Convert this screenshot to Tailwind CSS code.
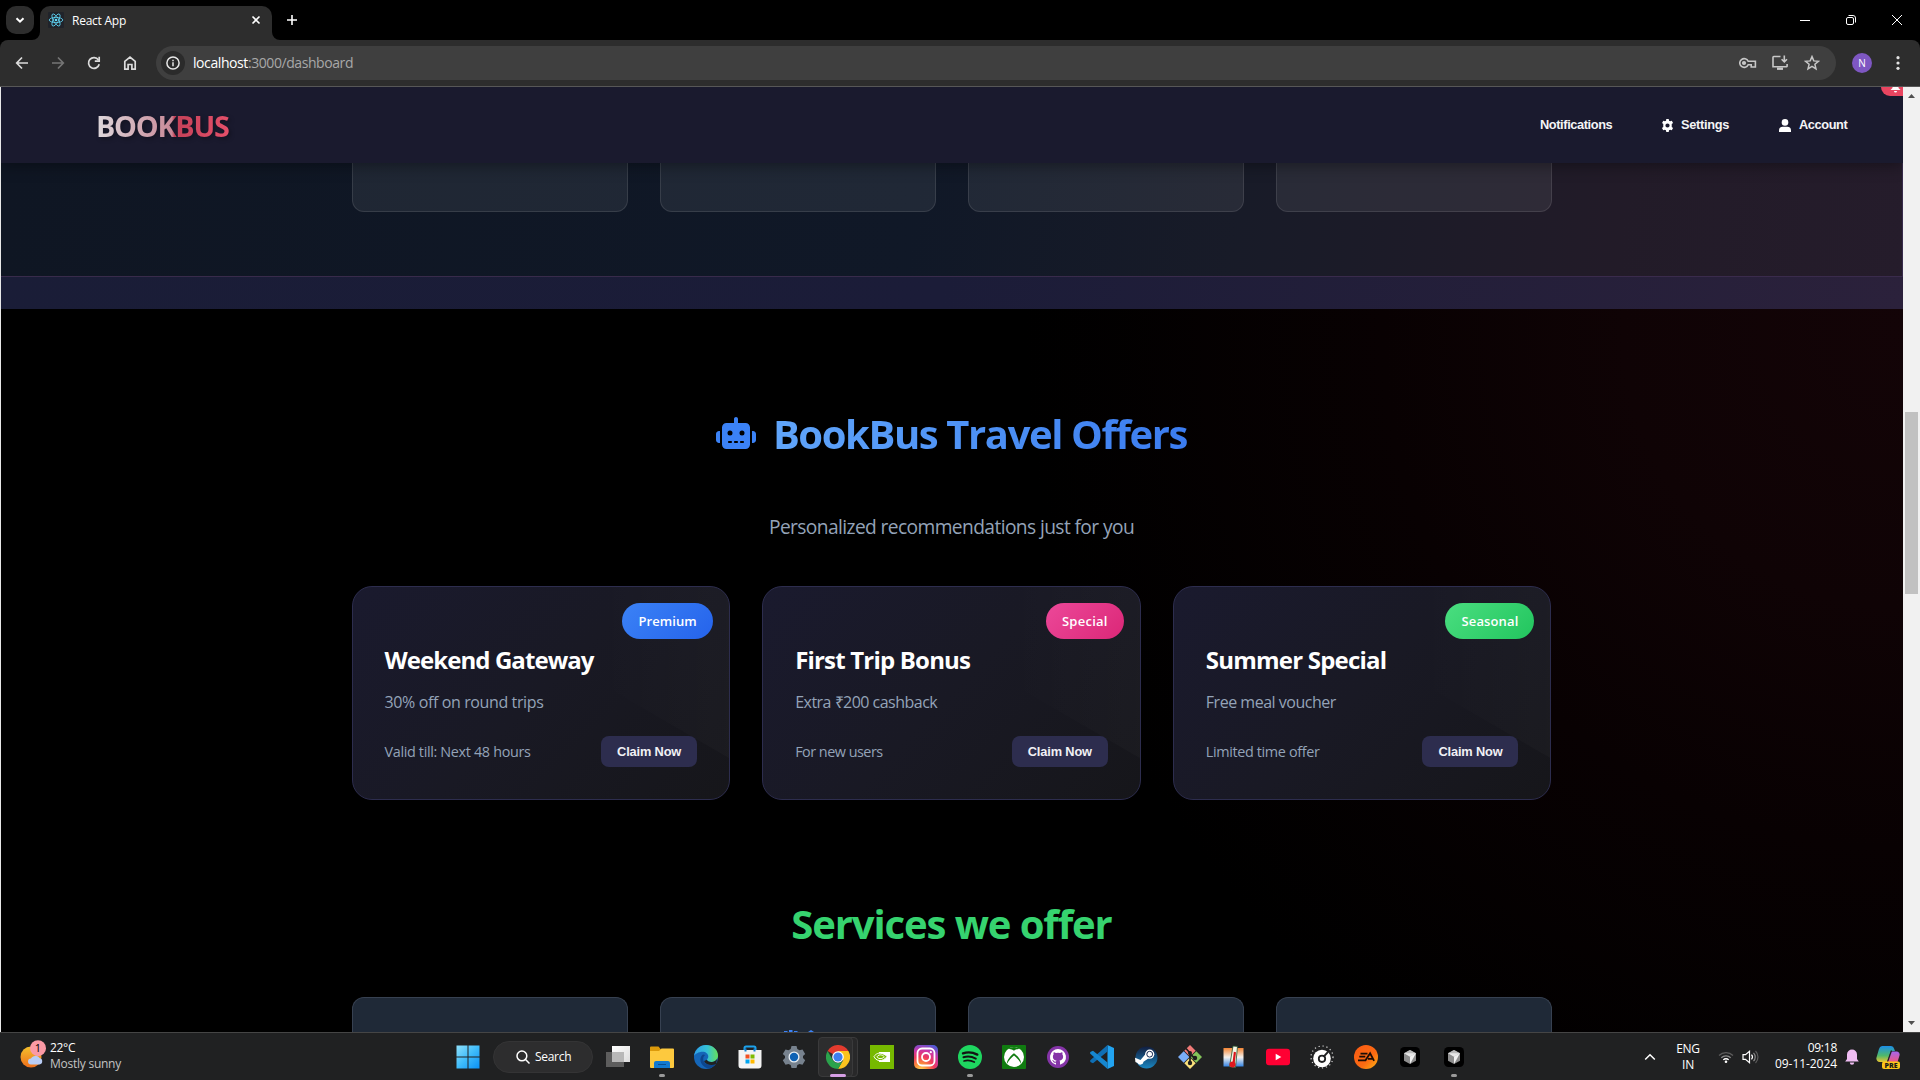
<!DOCTYPE html>
<html lang="en">
<head>
<meta charset="utf-8">
<title>React App</title>
<script src="https://cdn.jsdelivr.net/npm/@tailwindcss/browser@4"></script>
</head>
<body class="w-[1920px] h-[1080px] overflow-hidden bg-black font-['Open_Sans',sans-serif] flex flex-col">

<!-- Tab strip -->
<div class="h-10 shrink-0 bg-black flex items-center pl-1.5 relative">
  <div class="size-7 rounded-[10px] bg-[#2d2d2d] flex items-center justify-center">
    <svg class="size-3" viewBox="0 0 12 12" fill="none" stroke="#fff" stroke-width="2"><path d="M2.5 4.2 6 7.7l3.500-3.500"/></svg>
  </div>
  <div class="ml-1.5 w-[232px] h-[34px] self-end rounded-t-[10px] bg-[#2d2d2d] flex items-center pl-2 pr-[10px] relative">
    <svg class="absolute -left-2 bottom-0 size-2" viewBox="0 0 8 8"><path d="M8 0v8H0a8 8 0 0 0 8-8z" fill="#2d2d2d"/></svg>
    <svg class="absolute -right-2 bottom-0 size-2" viewBox="0 0 8 8"><path d="M0 0v8h8a8 8 0 0 1-8-8z" fill="#2d2d2d"/></svg>
    <svg class="size-4 mt-[-6px]" viewBox="0 0 16 16"><rect width="16" height="16" rx="1" fill="#20232a"/><g fill="none" stroke="#61dafb" stroke-width=".8"><ellipse cx="8" cy="8" rx="6.800" ry="2.600"/><ellipse cx="8" cy="8" rx="6.800" ry="2.600" transform="rotate(60 8 8)"/><ellipse cx="8" cy="8" rx="6.800" ry="2.600" transform="rotate(120 8 8)"/></g><circle cx="8" cy="8" r="1.300" fill="#61dafb"/></svg>
    <span class="ml-2 mt-[-5px] text-[12px] leading-4 tracking-[-0.25px] text-white">React App</span>
    <svg class="ml-auto mt-[-6px] size-3" viewBox="0 0 12 12" stroke="#fff" stroke-width="1.600"><path d="M2.500 2.500l7 7m0-7l-7 7"/></svg>
  </div>
  <svg class="ml-[14px] size-3" viewBox="0 0 12 12" stroke="#fff" stroke-width="1.600"><path d="M6 1v10M1 6h10"/></svg>
  <div class="ml-auto flex items-center gap-9 pr-[18px]">
    <svg class="size-[10px]" viewBox="0 0 10 10" stroke="#fff"><path d="M0 5.500h10"/></svg>
    <svg class="size-[10px]" viewBox="0 0 10 10" fill="none" stroke="#fff"><rect x=".5" y="2.500" width="7" height="7" rx="1.500"/><path d="M2.500.5h4.500a2.500 2.500 0 0 1 2.500 2.500v4.500"/></svg>
    <svg class="size-[10px] overflow-visible" viewBox="0 0 10 10" stroke="#fff"><path d="M0 0l10 10M10 0L0 10"/></svg>
  </div>
</div>

<!-- Toolbar -->
<div class="h-[46px] shrink-0 bg-[#2d2d2d] rounded-t-lg flex items-center">
  <div class="flex items-center gap-5 pl-[14px] w-[156px] text-[#dcdcdc]">
    <svg class="size-4" viewBox="0 0 16 16" fill="none" stroke="currentColor" stroke-width="1.700"><path d="M14 8H3M8 2.500L2.700 8 8 13.500"/></svg>
    <svg class="size-4 text-[#757575]" viewBox="0 0 16 16" fill="none" stroke="currentColor" stroke-width="1.700"><path d="M2 8h11M8 2.500L13.300 8 8 13.500"/></svg>
    <svg class="size-4" viewBox="0 0 16 16" fill="none" stroke="currentColor" stroke-width="1.700"><path d="M13.200 9.200A5.400 5.400 0 1 1 12.400 4.900"/><path d="M13.200 1.800v4.400H8.800"/></svg>
    <svg class="size-4" viewBox="0 0 16 16" fill="none" stroke="currentColor" stroke-width="1.700"><path d="M2.800 6.300L8 2.100l5.200 4.200v7.900H9.900V9.500H6.100v4.700H2.800z"/></svg>
  </div>
  <div class="w-[1680px] h-[34px] rounded-full bg-[#3f3f3f] flex items-center pl-[5px] pr-4">
    <div class="size-6 rounded-full bg-[#2b2b2b] flex items-center justify-center">
      <svg class="size-[14px]" viewBox="0 0 14 14"><circle cx="7" cy="7" r="6.100" fill="none" stroke="#e8e8e8" stroke-width="1.500"/><path d="M7 6.300v3.900M7 3.700v1.500" stroke="#e8e8e8" stroke-width="1.500"/></svg>
    </div>
    <div class="ml-2 text-[14px] leading-5 tracking-[-0.42px] text-[#a8a8a8]"><span class="text-white">localhost</span>:3000/dashboard</div>
    <div class="ml-auto flex items-center text-[#c7c7c7]">
      <svg class="w-[18px] h-[12px] mr-[15px]" viewBox="0 0 18 12" fill="none" stroke="currentColor" stroke-width="1.600"><path d="M9.200 4.300A4.400 4.400 0 1 0 9.200 7.700h3V10h4.200V4.300z"/><circle cx="5" cy="6" r="1.300" fill="currentColor"/></svg>
      <svg class="size-4 mr-4" viewBox="0 0 16 16" fill="none" stroke="currentColor" stroke-width="1.600"><path d="M8.500 1.500H1.800a.8.800 0 0 0-.8.800v9.400h13.700a.5.500 0 0 0 .4-.5V9M12.300.5v6M9.600 4.200l2.700 2.700L15 4.200"/><path d="M5 13.700h6" stroke-width="2.400"/></svg>
      <svg class="size-4" viewBox="0 0 16 16" fill="none" stroke="currentColor" stroke-width="1.500"><path d="M8 1.600l1.800 4.300 4.600.4-3.500 3 1.100 4.600L8 11.400l-4 2.500 1.100-4.600-3.500-3 4.600-.4z"/></svg>
    </div>
  </div>
  <div class="ml-4 size-5 rounded-full bg-[#7e57c2] text-white text-[10px] flex items-center justify-center">N</div>
  <svg class="ml-[18px] w-4 h-4" viewBox="0 0 16 16" fill="#e3e3e3"><circle cx="8" cy="2.700" r="1.600"/><circle cx="8" cy="8" r="1.600"/><circle cx="8" cy="13.300" r="1.600"/></svg>
</div>
<div class="h-px shrink-0 bg-[#575757]"></div>

<!-- Viewport -->
<div class="h-[945px] shrink-0 flex">
  <div class="w-px bg-[#e8e8e8]"></div>
  <main class="w-[1902px] overflow-hidden bg-[radial-gradient(circle_at_1902px_240px,#130407_0,#0f0305_280px,#080102_520px,#000_880px)] flex flex-col">
    <header class="h-[76px] shrink-0 bg-[#1a1a2e] shadow-[0_2px_15px_rgba(0,0,0,0.4)] relative z-10 flex items-center pl-[95px] pr-[55px]">
      <div class="mt-px text-[28.800px] leading-10 font-bold tracking-[-1.25px] bg-[linear-gradient(90deg,#ded8dc_0%,#c98a98_57%,#c44158_59%,#e5506a_100%)] bg-clip-text text-transparent [filter:drop-shadow(2px_2px_2px_rgba(0,0,0,0.3))]">BOOKBUS</div>
      <nav class="ml-auto flex items-center font-['Liberation_Sans',Arial,sans-serif] font-bold text-[12.800px] leading-5 tracking-[-0.4px] text-[#f4f4f6]">
        <span class="w-[121px]">Notifications</span>
        <svg class="size-[13px] mr-[7px]" viewBox="0 0 16 16"><path fill="#fff" fill-rule="evenodd" d="M6.500 0h3l.4 2.100 1.400.8 2-.7 1.500 2.600-1.600 1.400v3.600l1.600 1.400-1.500 2.600-2-.7-1.400.8-.4 2.100h-3l-.4-2.100-1.400-.8-2 .7-1.500-2.600 1.600-1.400V6.200L1.300 4.800l1.500-2.600 2 .7 1.400-.8zM8 5.400a2.600 2.600 0 1 0 0 5.200 2.600 2.600 0 0 0 0-5.200z"/></svg>
        <span class="w-[98px] tracking-[-0.3px]">Settings</span>
        <svg class="w-3 h-[13px] mr-2" viewBox="0 0 12 13" fill="#fff"><circle cx="6" cy="3.400" r="3.300"/><path d="M0 13v-1.500A3.700 3.700 0 0 1 3.700 7.800h4.600A3.700 3.700 0 0 1 12 11.500V13z"/></svg>
        <span class="w-[49px]">Account</span>
      </nav>
      <div class="absolute right-0 top-0 w-[22px] h-[9px] bg-[#e94560] rounded-bl-[9px]">
        <svg class="absolute left-[9px] top-0 w-[11px] h-[6px]" viewBox="0 0 11 6" fill="#fff"><path d="M2.500 0h6v1l2 2H.5l2-2zM4 4h3a1.500 1.500 0 0 1-3 0z"/></svg>
      </div>
    </header>

    <section class="h-[146px] shrink-0 flex flex-col bg-[linear-gradient(100deg,#1a1d37_0%,#1b1c38_50%,#2b213b_100%)]">
      <div class="h-[114px] border-b border-r border-[#3d2d50]/90 bg-[linear-gradient(97deg,#0f1623_0%,#101827_48%,#181b28_65%,#221b28_85%,#251c2b_100%)] flex justify-center gap-8">
        <div class="w-[276px] h-[49px] rounded-b-xl bg-white/7 border border-t-0 border-white/10"></div>
        <div class="w-[276px] h-[49px] rounded-b-xl bg-white/7 border border-t-0 border-white/10"></div>
        <div class="w-[276px] h-[49px] rounded-b-xl bg-white/7 border border-t-0 border-white/10"></div>
        <div class="w-[276px] h-[49px] rounded-b-xl bg-white/7 border border-t-0 border-white/10"></div>
      </div>
    </section>

    <section class="w-[1201px] pr-px mx-auto flex flex-col">
      <h2 class="mt-[101px] h-12 flex items-center justify-center gap-[17px]">
        <svg class="w-10 h-8 mt-[-3px]" viewBox="0 0 640 512" fill="#3b82f6"><path d="M320 0c17.700 0 32 14.300 32 32V96H472c39.800 0 72 32.200 72 72V440c0 39.800-32.200 72-72 72H168c-39.800 0-72-32.200-72-72V168c0-39.800 32.200-72 72-72H288V32c0-17.700 14.300-32 32-32zM208 384c-8.800 0-16 7.200-16 16s7.200 16 16 16h32c8.800 0 16-7.200 16-16s-7.200-16-16-16H208zm96 0c-8.800 0-16 7.200-16 16s7.200 16 16 16h32c8.800 0 16-7.200 16-16s-7.200-16-16-16H304zm96 0c-8.800 0-16 7.200-16 16s7.200 16 16 16h32c8.800 0 16-7.200 16-16s-7.200-16-16-16H400zM264 256a40 40 0 1 0-80 0 40 40 0 1 0 80 0zm152 40a40 40 0 1 0 0-80 40 40 0 1 0 0 80zM48 224H64V416H48c-26.500 0-48-21.500-48-48V272c0-26.500 21.500-48 48-48zm544 0c26.500 0 48 21.500 48 48v96c0 26.500-21.500 48-48 48H576V224h16z"/></svg>
        <span class="text-[40px] leading-12 font-bold tracking-[-1.4px] bg-linear-to-r from-[#60a5fa] to-[#3b7cf0] bg-clip-text text-transparent">BookBus Travel Offers</span>
      </h2>
      <p class="mt-[55px] h-7 text-center text-[19.200px] leading-7 tracking-[-0.6px] text-[#94a3b8]">Personalized recommendations just for you</p>

      <div class="mt-[45px] grid grid-cols-3 gap-8">
        <article class="h-[214px] rounded-[20px] border border-[#2d2d4e] bg-[linear-gradient(135deg,#1a1a2e_0%,#191924_50%,#16161a_100%)] px-8 pt-[57px] relative overflow-hidden">
          <div class="absolute right-0 top-0 w-[130px] h-[171px] bg-linear-to-r from-transparent to-white/2 [clip-path:polygon(0_0,100%_0,100%_100%,0_56%)]"></div>
          <span class="absolute top-4 right-4 h-9 w-[91px] rounded-[20px] bg-[linear-gradient(135deg,#3b82f6,#2563eb)] text-white text-[13px] leading-[37px] tracking-[0.08px] font-semibold text-center">Premium</span>
          <h3 class="text-2xl leading-8 font-bold tracking-[-0.93px] text-white relative">Weekend Gateway</h3>
          <p class="mt-[14px] text-base leading-6 tracking-[-0.38px] text-[#94a3b8] relative">30% off on round trips</p>
          <div class="mt-[22px] flex justify-between relative">
            <span class="text-[14.400px] leading-[31px] tracking-[-0.34px] text-[#94a3b8]">Valid till: Next 48 hours</span>
            <button class="w-24 h-[31px] rounded-lg bg-[#2d2d4e] font-['Liberation_Sans',Arial,sans-serif] font-bold text-[12.800px] tracking-[-0.15px] text-[#f1f1f5]">Claim Now</button>
          </div>
        </article>
        <article class="h-[214px] rounded-[20px] border border-[#2d2d4e] bg-[linear-gradient(135deg,#1a1a2e_0%,#191924_50%,#16161a_100%)] px-8 pt-[57px] relative overflow-hidden">
          <div class="absolute right-0 top-0 w-[130px] h-[171px] bg-linear-to-r from-transparent to-white/2 [clip-path:polygon(0_0,100%_0,100%_100%,0_56%)]"></div>
          <span class="absolute top-4 right-4 h-9 w-[78px] rounded-[20px] bg-[linear-gradient(135deg,#ec4899,#db2777)] text-white text-[13px] leading-[37px] tracking-[0.25px] font-semibold text-center">Special</span>
          <h3 class="text-2xl leading-8 font-bold tracking-[-0.81px] text-white relative">First Trip Bonus</h3>
          <p class="mt-[14px] text-base leading-6 tracking-[-0.52px] text-[#94a3b8] relative">Extra ₹200 cashback</p>
          <div class="mt-[22px] flex justify-between relative">
            <span class="text-[14.400px] leading-[31px] tracking-[-0.5px] text-[#94a3b8]">For new users</span>
            <button class="w-24 h-[31px] rounded-lg bg-[#2d2d4e] font-['Liberation_Sans',Arial,sans-serif] font-bold text-[12.800px] tracking-[-0.15px] text-[#f1f1f5]">Claim Now</button>
          </div>
        </article>
        <article class="h-[214px] rounded-[20px] border border-[#2d2d4e] bg-[linear-gradient(135deg,#1a1a2e_0%,#191924_50%,#16161a_100%)] px-8 pt-[57px] relative overflow-hidden">
          <div class="absolute right-0 top-0 w-[130px] h-[171px] bg-linear-to-r from-transparent to-white/2 [clip-path:polygon(0_0,100%_0,100%_100%,0_56%)]"></div>
          <span class="absolute top-4 right-4 h-9 w-[89px] rounded-[20px] bg-[linear-gradient(135deg,#4ade80,#22c55e)] text-white text-[13px] leading-[37px] tracking-[0.12px] font-semibold text-center">Seasonal</span>
          <h3 class="text-2xl leading-8 font-bold tracking-[-0.79px] text-white relative">Summer Special</h3>
          <p class="mt-[14px] text-base leading-6 tracking-[-0.48px] text-[#94a3b8] relative">Free meal voucher</p>
          <div class="mt-[22px] flex justify-between relative">
            <span class="text-[14.400px] leading-[31px] tracking-[-0.36px] text-[#94a3b8]">Limited time offer</span>
            <button class="w-24 h-[31px] rounded-lg bg-[#2d2d4e] font-['Liberation_Sans',Arial,sans-serif] font-bold text-[12.800px] tracking-[-0.15px] text-[#f1f1f5]">Claim Now</button>
          </div>
        </article>
      </div>

      <h2 class="mt-[100px] h-12 text-center text-[40px] leading-12 font-bold tracking-[-1.1px] text-[#36d36f]">Services we offer</h2>
      <div class="mt-[49px] grid grid-cols-4 gap-8">
        <div class="h-[60px] rounded-t-xl bg-[#1f2937] border border-b-0 border-[#374151]"></div>
        <div class="h-[60px] rounded-t-xl bg-[#1f2937] border border-b-0 border-[#374151] pt-8 pl-[122px]">
          <svg class="w-[34px] h-3" viewBox="0 0 34 12" fill="#3b82f6"><path d="M1 1h3.500v6H1zM6 0h3.500v7H6zM11 1h3.500v6H11zM25 2l3-2 3 2v5h-6z"/></svg>
        </div>
        <div class="h-[60px] rounded-t-xl bg-[#1f2937] border border-b-0 border-[#374151]"></div>
        <div class="h-[60px] rounded-t-xl bg-[#1f2937] border border-b-0 border-[#374151]"></div>
      </div>
    </section>
  </main>
  <!-- Scrollbar -->
  <div class="w-[17px] bg-[#f1f1f1] flex flex-col items-center justify-between py-[7px] relative">
    <svg class="w-[7px] h-1" viewBox="0 0 7 4" fill="#505050"><path d="M0 4l3.500-4L7 4z"/></svg>
    <div class="absolute top-[325px] h-[182px] w-[13px] bg-[#c1c1c1]"></div>
    <svg class="w-[7px] h-1" viewBox="0 0 7 4" fill="#505050"><path d="M0 0l3.500 4L7 0z"/></svg>
  </div>
</div>

<!-- Taskbar -->
<footer class="h-12 shrink-0 bg-[#202122] border-t border-[#454545] flex items-center relative text-white text-[12px] leading-4 whitespace-nowrap">
  <div class="pl-[19px] flex items-center w-[446px]">
    <svg class="w-[28px] h-[30px] -mt-1" viewBox="0 0 28 30"><defs><linearGradient id="sun" x1="0" y1="0" x2="0" y2="1"><stop offset="0" stop-color="#f5c02c"/><stop offset="1" stop-color="#ee6f1c"/></linearGradient></defs><circle cx="12" cy="17" r="10.500" fill="url(#sun)"/><path d="M12 24.500a3 3 0 0 1 0-6 5 5 0 0 1 8.500-.5 3.300 3.300 0 0 1 0 6.500z" fill="#b9cdf5"/><circle cx="19" cy="8.200" r="8" fill="#fb9aa5"/><text x="19" y="12" text-anchor="middle" font-size="11" fill="#000" font-family="Open Sans">1</text></svg>
    <div class="ml-[3px] -mt-px flex flex-col">
      <span class="tracking-[-0.3px]">22°C</span>
      <span class="tracking-[-0.25px] text-[#c4c4c4]">Mostly sunny</span>
    </div>
  </div>

  <div class="flex items-center">
    <div class="w-11 flex justify-center"><svg class="size-6" viewBox="0 0 24 24"><defs><linearGradient id="win" x1="0" y1="0" x2="1" y2="1"><stop offset="0" stop-color="#8fe0fb"/><stop offset=".5" stop-color="#3fbcfb"/><stop offset="1" stop-color="#0a90f5"/></linearGradient></defs><path fill="url(#win)" d="M.5.5h11v11H.5zM12.500.5h11v11h-11zM.5 12.500h11v11H.5zM12.500 12.500h11v11h-11z"/></svg></div>
    <div class="ml-[3px] w-[100px] h-8 rounded-full bg-[#2d2d2e] border border-[#343435] flex items-center pl-[22px]">
      <svg class="size-[14px]" viewBox="0 0 14 14" fill="none" stroke="#fff" stroke-width="1.500"><circle cx="5.900" cy="5.900" r="4.900"/><path d="M9.300 9.300l4.200 4.200"/></svg>
      <span class="ml-[5px] tracking-[-0.3px]">Search</span>
    </div>
    <div class="ml-[3px] w-11 flex justify-center"><svg class="size-6" viewBox="0 0 24 24"><defs><linearGradient id="tv" x1="0" y1="0" x2="1" y2="1"><stop offset="0" stop-color="#fff"/><stop offset="1" stop-color="#dcdcdc"/></linearGradient></defs><rect x="6" y="1" width="18" height="16" fill="url(#tv)"/><rect x="0" y="7" width="18" height="15" fill="#5d5d5d"/><rect x="6" y="7" width="12" height="10" fill="#b8b8b8"/></svg></div>

    <!-- File Explorer -->
    <div class="w-11 h-12 flex items-center justify-center relative"><svg class="size-6" viewBox="0 0 24 24"><path d="M0 2.500a1 1 0 0 1 1-1h7.500L11 4.500V9H0z" fill="#dc9a0b"/><path d="M0 6h9l2.500-2.500H23a1 1 0 0 1 1 1V22a1 1 0 0 1-1 1H1a1 1 0 0 1-1-1z" fill="#fdc93e"/><path d="M4 23v-5a2 2 0 0 1 2-2h12a2 2 0 0 1 2 2v5z" fill="#1379cf"/><path d="M8 19.500h8" stroke="#0a4f93"/></svg><i class="absolute bottom-[4px] w-[6px] h-[3px] rounded-full bg-[#9a9a9a]"></i></div>
    <!-- Edge -->
    <div class="w-11 flex justify-center"><svg class="size-6" viewBox="0 0 24 24"><defs><linearGradient id="e1" x1="0" y1=".3" x2="1" y2=".3"><stop offset="0" stop-color="#2f9fe8"/><stop offset=".55" stop-color="#35c1d6"/><stop offset="1" stop-color="#66e05a"/></linearGradient></defs><circle cx="12" cy="12" r="12" fill="#1566b8"/><path d="M.1 11A12 12 0 0 1 12 0c7 0 12 5 12 10.500 0 4-3 6.500-6.500 6.500-3 0-4.500-1.200-4.500-2.200 0-.8 1.300-1.300 1.300-3.300 0-2.700-2.600-4.800-5.600-4.800C4.500 6.700 1 9 .1 11z" fill="url(#e1)"/><path d="M9 9.500c-2.200 1.500-3 4-2.500 6.500.8 4 4.500 7 8.500 7.600 3-.8 5.500-2.600 7-5-5 2.500-12.600 1.200-12.800-4.600 0-1.800.8-3.300 2-4z" fill="#0d468e"/><path d="M13 14.800c0 1 1.500 2.200 4.500 2.200 2.500 0 4.600-1.200 5.700-3.200L22 19c-4 2.200-10.500 1-12-3z" fill="#202122"/></svg></div>
    <!-- Store -->
    <div class="w-11 flex justify-center"><svg class="size-6" viewBox="0 0 24 24"><path d="M6.500 7V3a1.500 1.500 0 0 1 1.500-1.500h8A1.500 1.500 0 0 1 17.500 3v4" fill="none" stroke="#1ca3ee" stroke-width="2"/><path d="M.5 5h23v15.500a3 3 0 0 1-3 3h-17a3 3 0 0 1-3-3z" fill="#f3f3f3"/><path d="M6.500 5h2M15.500 5h2" stroke="#1580d0" stroke-width="3"/><path d="M7.500 9.500h4v4h-4z" fill="#f25022"/><path d="M12.500 9.500h4v4h-4z" fill="#7fba00"/><path d="M7.500 14.500h4v4h-4z" fill="#00a4ef"/><path d="M12.500 14.500h4v4h-4z" fill="#ffb900"/></svg></div>
    <!-- Settings -->
    <div class="w-11 flex justify-center"><svg class="size-6" viewBox="0 0 24 24"><path d="M9.500 1h5l.8 3 2.200 1.200 3-.8 2.700 4.500L21 11v2l2.200 2.200-2.700 4.500-3-.8-2.200 1.200-.8 3h-5l-.8-3-2.200-1.200-3 .8L.8 15.200 3 13v-2L.8 8.900l2.700-4.500 3 .8L8.700 4z" fill="#77828e"/><circle cx="12" cy="12" r="5.500" fill="#e9eef3"/><circle cx="12" cy="12" r="4.200" fill="#0f62b4"/></svg></div>
    <!-- Chrome -->
    <div class="w-11 h-12 flex items-center justify-center relative"><i class="absolute left-[4px] top-[4px] w-[38px] h-10 rounded bg-[#282829] border border-[#3a3a3b]"></i><i class="absolute left-[2px] top-[4px] w-[35px] h-10 rounded bg-[#2d2d2e] border border-[#3a3a3b]"></i><svg class="size-6 relative" viewBox="0 0 24 24"><path d="M12 12L1.600 6A12 12 0 0 1 22.400 6z" fill="#e33b2e"/><path d="M12 6h10.400A12 12 0 0 1 12 24l5.200-9z" fill="#fcc31e"/><path d="M1.600 6l5.200 9a6 6 0 0 0 10.400 0L12 24A12 12 0 0 1 1.600 6z" fill="#2ba24c"/><circle cx="12" cy="12" r="5.800" fill="#fff"/><circle cx="12" cy="12" r="4.600" fill="#3f7fee"/></svg><i class="absolute bottom-[4px] w-4 h-[3px] rounded-full bg-[#d69fe5]"></i></div>
    <!-- Nvidia -->
    <div class="w-11 flex justify-center"><svg class="size-6" viewBox="0 0 24 24"><path d="M0 0h24v24H0z" fill="#76b900"/><path d="M9 7h11v10H9z" fill="#fff"/><path d="M4 11.500C6 8.500 9 7.500 12 8.500s4 2 5 3.200c-2 2.500-5 4.300-8 3.800S5 13.500 4 11.500z" fill="#76b900" stroke="#fff"/><path d="M7 11.800c1-1.700 3-2.300 4.500-1.800s2.200 1.200 2.800 1.800c-1.300 1.300-2.800 2-4.300 1.800S7.500 12.800 7 11.800z" fill="none" stroke="#fff"/></svg></div>
    <!-- Instagram -->
    <div class="w-11 flex justify-center"><svg class="size-6" viewBox="0 0 24 24"><defs><radialGradient id="ig" cx=".28" cy="1.050" r="1.150"><stop offset="0" stop-color="#fed955"/><stop offset=".25" stop-color="#fb8b3c"/><stop offset=".5" stop-color="#ef3a5d"/><stop offset=".75" stop-color="#c837ab"/><stop offset="1" stop-color="#4f5bd5"/></radialGradient></defs><rect width="24" height="24" rx="5" fill="url(#ig)"/><rect x="3.500" y="3.500" width="17" height="17" rx="4.500" fill="none" stroke="#fff" stroke-width="1.800"/><circle cx="12" cy="12" r="4" fill="none" stroke="#fff" stroke-width="1.800"/><circle cx="16.800" cy="7.200" r="1.100" fill="#fff"/></svg></div>
    <!-- Spotify -->
    <div class="w-11 h-12 flex items-center justify-center relative"><svg class="size-6" viewBox="0 0 24 24"><circle cx="12" cy="12" r="12" fill="#1ed760"/><g fill="none" stroke="#131313" stroke-linecap="round"><path d="M5 8.300c4.500-1.500 10-1 14.300 1.300" stroke-width="2.400"/><path d="M5.500 12.300c4-1.200 8.500-.7 12.300 1.300" stroke-width="2"/><path d="M6 16c3.500-1 7-.6 10.300 1.100" stroke-width="1.700"/></g></svg><i class="absolute bottom-[4px] w-[6px] h-[3px] rounded-full bg-[#9a9a9a]"></i></div>
    <!-- Xbox -->
    <div class="w-11 flex justify-center"><svg class="size-6" viewBox="0 0 24 24"><rect width="24" height="24" rx="1" fill="#107c10"/><circle cx="12" cy="12" r="10" fill="#fff"/><path d="M6 4.200c2-.6 4.300.4 6 1.500 1.700-1.100 4-2.100 6-1.500-1.500-1.400-4-2.300-6-2.300s-4.500.9-6 2.300zM12 8.200c4 3 7.400 7.500 7 10.500-1.500-3-4.500-6-7-8.200-2.500 2.200-5.500 5.200-7 8.200-.4-3 3-7.500 7-10.500z" fill="#107c10"/></svg></div>
    <!-- GitHub -->
    <div class="w-11 flex justify-center"><svg class="size-[22px]" viewBox="0 0 22 22"><circle cx="11" cy="11" r="11" fill="#8534a8"/><path fill="#fff" d="M11 3a8 8 0 0 0-2.500 15.600c.4.100.5-.2.500-.4v-1.500c-2.200.5-2.700-1-2.700-1-.4-.9-.9-1.200-.9-1.200-.7-.5.100-.5.100-.5.800.1 1.200.8 1.200.8.700 1.200 1.900.9 2.300.7.100-.5.300-.9.500-1.100-1.800-.2-3.600-.9-3.600-4 0-.9.300-1.600.8-2.100-.1-.2-.4-1 .1-2.100 0 0 .7-.2 2.200.8a7.600 7.600 0 0 1 4 0c1.500-1 2.200-.8 2.200-.8.500 1.100.2 1.900.1 2.100.5.500.8 1.200.8 2.100 0 3.100-1.900 3.800-3.700 4 .3.200.6.700.6 1.500v2.300c0 .2.100.5.500.4A8 8 0 0 0 11 3z"/></svg></div>
    <!-- VS Code -->
    <div class="w-11 flex justify-center"><svg class="size-6" viewBox="0 0 24 24"><path d="M17.500 0L24 3v18l-6.500 3z" fill="#22a4f1"/><path d="M17.500 0v6.500L3 18.200.8 17.200c-.9-.6-1-1.500-.2-2.200z" fill="#0f6fb5"/><path d="M17.500 24v-6.500L3 5.800.8 6.800C-.1 7.400-.2 8.300.6 9z" fill="#1687d0"/></svg></div>
    <!-- Steam -->
    <div class="w-11 flex justify-center"><svg class="size-6" viewBox="0 0 24 24"><defs><linearGradient id="st" x1="0" y1="0" x2="0" y2="1"><stop offset="0" stop-color="#111d3f"/><stop offset="1" stop-color="#1a86c0"/></linearGradient></defs><circle cx="12.500" cy="12.500" r="11" fill="url(#st)"/><path d="M1 12.800l5.500 2.200 5.500-6.500L15 13l-5.500 3.800a3.200 3.200 0 0 1-6 1.200L1.400 17z" fill="#fff"/><circle cx="15.700" cy="9.200" r="4.600" fill="#fff"/><circle cx="15.700" cy="9.200" r="2.900" fill="none" stroke="#172a52" stroke-width="1"/></svg></div>
    <!-- Git Bash -->
    <div class="w-11 flex justify-center"><svg class="size-6" viewBox="0 0 24 24"><path d="M12 0l5.700 5.700L12 11.400 6.300 5.700z" fill="#f07a77"/><path d="M5.700 6.300l5.700 5.700-5.700 5.700L0 12z" fill="#7aaef8"/><path d="M18.300 6.300L24 12l-5.700 5.700-5.700-5.700z" fill="#83c45a"/><path d="M12 12.600l5.700 5.700L12 24l-5.700-5.700z" fill="#fbe17b"/><path d="M8 3.500l4 4.500v10M12 9l5 4.500" stroke="#1c1c1c" stroke-width="1.700" fill="none"/><circle cx="12" cy="8" r="2" fill="#1c1c1c"/><circle cx="12" cy="18" r="2.200" fill="#1c1c1c"/><circle cx="17" cy="13" r="2.200" fill="#1c1c1c"/></svg></div>
    <!-- Core Temp -->
    <div class="w-11 flex justify-center"><svg class="size-6" viewBox="0 0 24 24"><defs><linearGradient id="ct" x1="0" y1="0" x2="0" y2="1"><stop offset="0" stop-color="#f58634"/><stop offset=".5" stop-color="#f4f1ee"/><stop offset="1" stop-color="#3585e4"/></linearGradient></defs><rect x="1.500" y="3" width="20" height="18.500" fill="url(#ct)"/><path d="M11 1l4.500.4-2 21-6-.6z" fill="#f6f6e6" stroke="#23502b" stroke-width=".8"/><path d="M12.900 7l-1.400 12" stroke="#d9151b" stroke-width="2.200"/><circle cx="10.500" cy="19.500" r="3" fill="#e01820"/></svg></div>
    <!-- YouTube -->
    <div class="w-11 flex justify-center"><svg class="size-6" viewBox="0 0 24 24"><rect y="3.700" width="24" height="16.600" rx="3" fill="#ff0033"/><path d="M9.700 8.700v6.600l5.600-3.300z" fill="#fff"/></svg></div>
    <!-- Gauge -->
    <div class="w-11 flex justify-center"><svg class="size-6" viewBox="0 0 24 24"><circle cx="12" cy="12" r="11" fill="none" stroke="#d8d8d8" stroke-width="1.200" stroke-dasharray="1.200 2.800"/><circle cx="12" cy="13.500" r="8.800" fill="#fff"/><circle cx="12" cy="13.800" r="3.200" fill="none" stroke="#202122" stroke-width="1.800"/><path d="M13.500 11.800l5-5.500" stroke="#202122" stroke-width="2"/></svg></div>
    <!-- EA -->
    <div class="w-11 flex justify-center"><svg class="size-6" viewBox="0 0 24 24"><defs><linearGradient id="ea" x1="0" y1="0" x2="1" y2="1"><stop offset="0" stop-color="#fb5a14"/><stop offset=".6" stop-color="#fb6a12"/><stop offset="1" stop-color="#fdb514"/></linearGradient></defs><circle cx="12" cy="12" r="12" fill="url(#ea)"/><path d="M6.500 8.600h7M5.300 11.600h6M4 15.300h7.500l4.600-7 4 7.600M14 13.800h5" fill="none" stroke="#1a0d07" stroke-width="1.800"/></svg></div>
    <!-- Cursor -->
    <div class="w-11 flex justify-center"><svg class="size-5" viewBox="0 0 20 20"><rect width="20" height="20" rx="4.500" fill="#000"/><path d="M10 3l6 3.300v7.400L10 17l-6-3.300V6.300z" fill="#8d8d8d"/><path d="M4 6.300L10 3l6 3.300-6 1.900z" fill="#bbb"/><path d="M16 6.300L10 17v-7.500z" fill="#f2f2f2"/><path d="M4 6.300h12L10 9.700z" fill="#e8e8e8"/></svg></div>
    <div class="w-11 h-12 flex items-center justify-center relative"><svg class="size-5" viewBox="0 0 20 20"><rect width="20" height="20" rx="4.500" fill="#000"/><path d="M10 3l6 3.300v7.400L10 17l-6-3.300V6.300z" fill="#8d8d8d"/><path d="M4 6.300L10 3l6 3.300-6 1.900z" fill="#bbb"/><path d="M16 6.300L10 17v-7.500z" fill="#f2f2f2"/><path d="M4 6.300h12L10 9.700z" fill="#e8e8e8"/></svg><i class="absolute bottom-[4px] w-[6px] h-[3px] rounded-full bg-[#9a9a9a]"></i></div>
  </div>

  <!-- System tray -->
  <div class="ml-auto flex items-center pr-[19px]">
    <svg class="w-3 h-2" viewBox="0 0 12 8" fill="none" stroke="#fff" stroke-width="1.500"><path d="M1.200 6.500L6 1.700l4.800 4.800"/></svg>
    <div class="ml-[20px] w-6 flex flex-col items-center tracking-[-0.3px]"><span>ENG</span><span>IN</span></div>
    <svg class="ml-[18px] w-4 h-[14px]" viewBox="0 0 16 14" fill="none" stroke-width="1.300"><path d="M1 5.500a10 10 0 0 1 14 0" stroke="#5c5c5c"/><path d="M3.300 7.800a6.700 6.700 0 0 1 9.400 0" stroke="#8a8a8a"/><path d="M5.300 9.900a3.800 3.800 0 0 1 5.400 0" stroke="#fff"/><circle cx="8" cy="11.800" r="1.300" fill="#fff"/></svg>
    <svg class="ml-2 w-[17px] h-[14px]" viewBox="0 0 17 14" fill="none" stroke="#fff" stroke-width="1.200"><path d="M1 4.700h2.500L7.500 1.300v11.400L3.500 9.300H1z"/><path d="M9.500 4.700a3.500 3.500 0 0 1 0 4.600"/><path d="M11.500 2.800a6 6 0 0 1 0 8.400" stroke="#8a8a8a"/><path d="M13.500 1a8.500 8.500 0 0 1 0 12" stroke="#5c5c5c"/></svg>
    <div class="ml-4 -mt-px w-[62px] flex flex-col items-end"><span class="tracking-[-0.25px]">09:18</span><span class="tracking-[-0.06px]">09-11-2024</span></div>
    <svg class="ml-2 w-[14px] h-4" viewBox="0 0 14 16" fill="#f0bdf3"><path d="M7 .5a5 5 0 0 1 5 5V10l1.800 2.500H.2L2 10V5.500a5 5 0 0 1 5-5zM4.800 13.500h4.400a2.200 2.200 0 0 1-4.400 0z"/></svg>
    <svg class="ml-[17px] w-[25px] h-6" viewBox="0 0 25 24"><defs><linearGradient id="c1" x1="0" y1="0" x2="0" y2="1"><stop offset="0" stop-color="#1c8fe8"/><stop offset=".6" stop-color="#4fb86b"/><stop offset="1" stop-color="#e9c52f"/></linearGradient><linearGradient id="c2" x1="0" y1="0" x2="0" y2="1"><stop offset="0" stop-color="#a565ee"/><stop offset="1" stop-color="#f0577f"/></linearGradient></defs><path d="M6 1h9a3 3 0 0 1 3 2.500L19 6h-4l-4 11H4a3.500 3.500 0 0 1-3.500-4.500L3 4a4 4 0 0 1 3-3z" fill="url(#c1)"/><path d="M15 6.500h6a3 3 0 0 1 2.500 4L21.500 17H11z" fill="url(#c2)"/><path d="M15.500 5.500L11.500 17" stroke="#202122" stroke-width="1.200"/><rect x="6" y="16.500" width="18" height="7.500" rx="2" fill="#fcc419"/><text x="15" y="22.900" text-anchor="middle" font-size="7" font-weight="800" fill="#1a1a1a" font-family="Open Sans">PRE</text></svg>
  </div>
</footer>
</body>
</html>
